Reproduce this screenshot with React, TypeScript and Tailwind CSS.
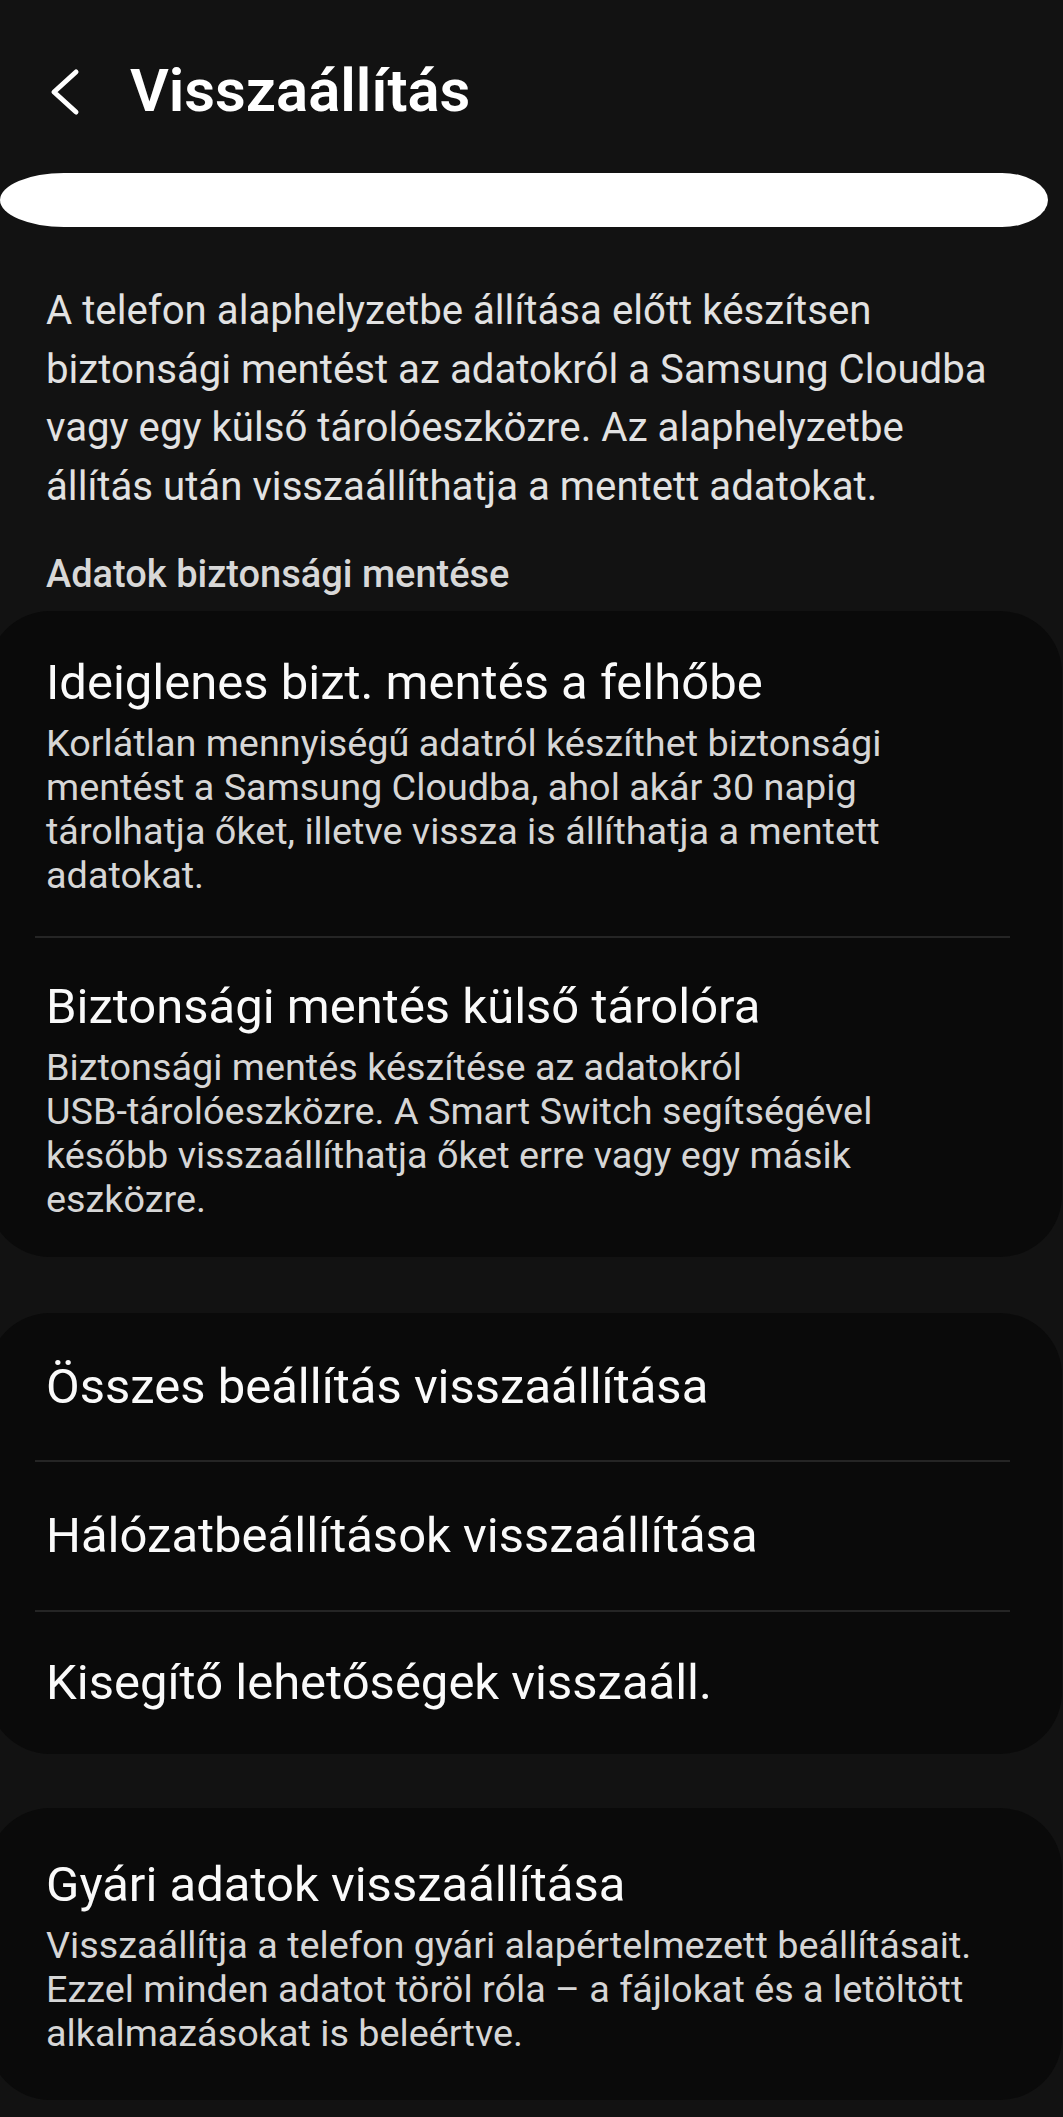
import React from "react";

const font = { fontFamily: "Roboto, 'Noto Sans', sans-serif" };

const Divider = () => <div className="ml-[47px] mr-[52px] h-[2px] bg-[#252525]" />;

const DetailItem = ({
  title,
  lines,
  className,
}: {
  title: string;
  lines: string[];
  className: string;
}) => (
  <div className={className}>
    <div className="text-[49px] leading-[56px] text-[#fafafa]">{title}</div>
    <div className="mt-[10px] text-[37.8px] leading-[44px] text-[#d6d6d6]">
      {lines.map((l) => (
        <div key={l} className="whitespace-nowrap">
          {l}
        </div>
      ))}
    </div>
  </div>
);

export default function App() {
  return (
    <div className="w-[1063px] min-h-[2117px] overflow-hidden bg-[#121212]" style={font}>
      {/* Header */}
      <div className="flex h-[173px] items-center pt-[11px]">
        <svg width="34" height="50" viewBox="0 0 34 50" className="ml-[48px]" fill="none">
          <path
            d="M28 5 L6 25 L28 45"
            stroke="#ffffff"
            strokeWidth="5"
            strokeLinecap="round"
            strokeLinejoin="round"
          />
        </svg>
        <h1 className="ml-[48px] text-[59.8px] font-semibold leading-none text-white">
          Visszaállítás
        </h1>
      </div>

      {/* Pill */}
      <div className="h-[54px] w-[1048px] rounded-[64px_46px_46px_64px/27px] bg-white" />

      {/* Intro */}
      <div className="mt-[55px] pl-[46px] text-[40.2px] leading-[58.5px] text-[#e2e2e2] whitespace-nowrap">
        <div>A telefon alaphelyzetbe állítása előtt készítsen</div>
        <div>biztonsági mentést az adatokról a Samsung Cloudba</div>
        <div>vagy egy külső tárolóeszközre. Az alaphelyzetbe</div>
        <div>állítás után visszaállíthatja a mentett adatokat.</div>
      </div>

      <div className="mt-[38px] pl-[46px] text-[38px] font-medium leading-[40px] text-[#d8d8d8]">
        Adatok biztonsági mentése
      </div>

      {/* Backup card */}
      <div className="mt-[17px] -ml-3 mr-px rounded-[62px] bg-[#0a0a0a]">
        <DetailItem
          className="pl-[58px] pr-6 pt-[44px] pb-[39px]"
          title="Ideiglenes bizt. mentés a felhőbe"
          lines={[
            "Korlátlan mennyiségű adatról készíthet biztonsági",
            "mentést a Samsung Cloudba, ahol akár 30 napig",
            "tárolhatja őket, illetve vissza is állíthatja a mentett",
            "adatokat.",
          ]}
        />
        <Divider />
        <DetailItem
          className="pl-[58px] pr-6 pt-[41px] pb-[36px]"
          title="Biztonsági mentés külső tárolóra"
          lines={[
            "Biztonsági mentés készítése az adatokról",
            "USB-tárolóeszközre. A Smart Switch segítségével",
            "később visszaállíthatja őket erre vagy egy másik",
            "eszközre.",
          ]}
        />
      </div>

      {/* Reset card */}
      <div className="mt-[56px] -ml-3 mr-px rounded-[62px] bg-[#0a0a0a]">
        <div className="flex h-[147px] items-center pl-[58px] text-[49px] text-[#fafafa]">
          Összes beállítás visszaállítása
        </div>
        <Divider />
        <div className="flex h-[148px] items-center pl-[58px] text-[49px] text-[#fafafa]">
          Hálózatbeállítások visszaállítása
        </div>
        <Divider />
        <div className="flex h-[142px] items-center pl-[58px] text-[49px] text-[#fafafa]">
          Kisegítő lehetőségek visszaáll.
        </div>
      </div>

      {/* Factory reset card */}
      <div className="mt-[54px] -ml-3 mr-px rounded-[62px] bg-[#0a0a0a]">
        <DetailItem
          className="pl-[58px] pr-6 pt-[49px] pb-[45px]"
          title="Gyári adatok visszaállítása"
          lines={[
            "Visszaállítja a telefon gyári alapértelmezett beállításait.",
            "Ezzel minden adatot töröl róla – a fájlokat és a letöltött",
            "alkalmazásokat is beleértve.",
          ]}
        />
      </div>
    </div>
  );
}
